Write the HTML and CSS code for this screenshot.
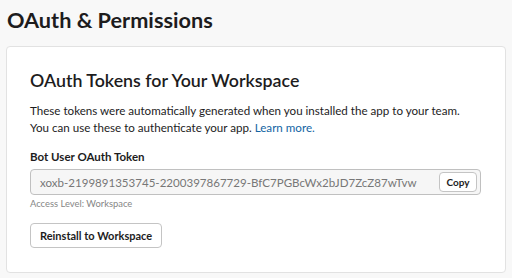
FILE: index.html
```html
<!DOCTYPE html>
<html lang="en">
<head>
    <meta charset="UTF-8">
    <title>OAuth &amp; Permissions</title>
    <link rel="stylesheet" href="styles.css">
</head>
<body>
    <h1 class="page-title">OAuth &amp; Permissions</h1>

    <div class="card">
        <h2 class="card-title">OAuth Tokens for Your Workspace</h2>
        <p class="card-text">
            These tokens were automatically generated when you installed the app to your team.<br>
            You can use these to authenticate your app. <a href="#" class="link">Learn more.</a>
        </p>

        <div class="field">
            <label class="field-label">Bot User OAuth Token</label>
            <div class="token-box">
                <span class="token-value">xoxb-2199891353745-2200397867729-BfC7PGBcWx2bJD7ZcZ87wTvw</span>
                <button class="btn btn-small">Copy</button>
            </div>
            <div class="field-hint">Access Level: Workspace</div>
        </div>

        <button class="btn">Reinstall to Workspace</button>
    </div>
</body>
</html>
```

FILE: styles.css
```css
body {
    margin: 0;
    padding: 0 6px;
    background: #f8f8f8;
    font-family: Lato, "Open Sans", sans-serif;
    color: #1d1c1d;
}
.page-title {
    margin: 0;
    padding: 6px 0 0 1px;
    font-size: 21.7px;
    font-weight: 700;
    line-height: 29px;
    height: 40px;
}
.card {
    background: #fff;
    border: 1px solid #e2e2e2;
    border-radius: 4px;
    padding: 21px 23px 24px;
}
.card-title {
    margin: 0 0 10px;
    font-size: 17.8px;
    font-weight: 600;
    line-height: 24px;
}
.card-text {
    margin: 0 0 13px;
    font-size: 11.6px;
    line-height: 17px;
    white-space: nowrap;
}
.link {
    color: #1264a3;
    text-decoration: none;
}
.field-label {
    display: block;
    font-size: 11.5px;
    font-weight: 700;
    line-height: 16px;
    margin-bottom: 4px;
}
.token-box {
    display: flex;
    align-items: center;
    justify-content: space-between;
    width: 451px;
    height: 26px;
    box-sizing: border-box;
    padding: 0 3px 0 9px;
    background: #f6f6f6;
    border: 1px solid #c0c0c0;
    border-radius: 4px;
}
.token-value {
    font-size: 11.55px;
    color: #777;
    white-space: nowrap;
}
.field-hint {
    font-size: 9.4px;
    line-height: 12px;
    color: #868686;
    margin: 3px 0 13px;
}
.btn {
    font-family: inherit;
    font-size: 11px;
    font-weight: 700;
    color: #1d1c1d;
    background: #fff;
    border: 1px solid #c4c4c4;
    border-radius: 4px;
    height: 25px;
    padding: 0 9px;
}
.btn-small {
    font-size: 10px;
    height: 20px;
    width: 38px;
    padding: 0;
}
```
